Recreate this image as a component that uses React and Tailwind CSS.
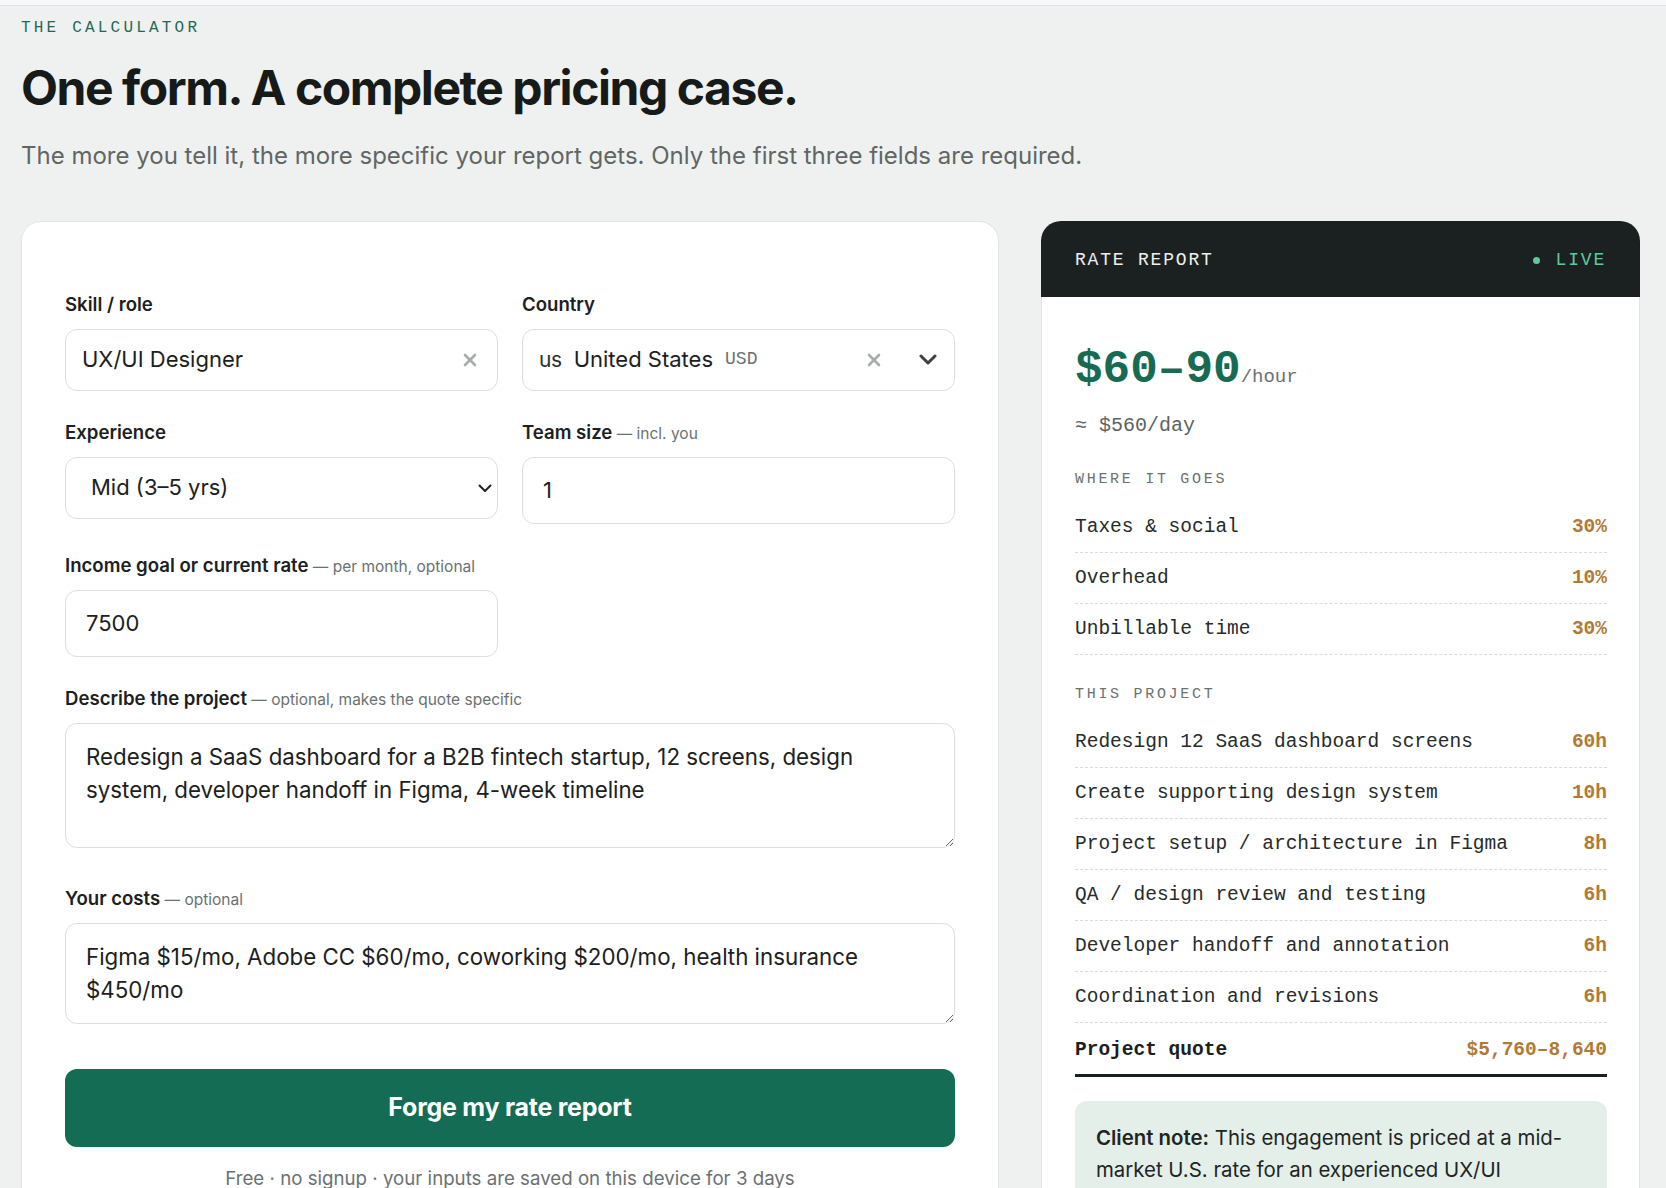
import React from "react";

// Calculator page: intake form on the left, live rate report on the right

const breakdown = [
  { label: "Taxes & social", value: "30%" },
  { label: "Overhead", value: "10%" },
  { label: "Unbillable time", value: "30%" },
];

const tasks = [
  { label: "Redesign 12 SaaS dashboard screens", value: "60h" },
  { label: "Create supporting design system", value: "10h" },
  { label: "Project setup / architecture in Figma", value: "8h" },
  { label: "QA / design review and testing", value: "6h" },
  { label: "Developer handoff and annotation", value: "6h" },
  { label: "Coordination and revisions", value: "6h" },
];

const XIcon = () => (
  <svg width="14" height="14" viewBox="0 0 14 14" className="shrink-0">
    <path d="M2 2L12 12M12 2L2 12" stroke="#a7aba9" strokeWidth="2.6" strokeLinecap="round" />
  </svg>
);

const FieldLabel = ({ children, hint }) => (
  <label className="block h-[27px] text-[18.6px] leading-[27px] font-semibold text-[#1b2120]">
    {children}
    {hint && <span className="text-[15.5px] font-normal text-[#6b7170]"> — {hint}</span>}
  </label>
);

const ReportRow = ({ label, value }) => (
  <div className="flex items-center justify-between border-b border-dashed border-[#d9dcda] py-[11px] text-[19.5px] leading-[28px]">
    <span className="text-[#262b29]">{label}</span>
    <span className="font-semibold text-[#b07a35]">{value}</span>
  </div>
);

const SectionTitle = ({ children, className = "" }) => (
  <div className={`text-[15px] leading-[20px] tracking-[0.18em] text-[#6b7170] ${className}`}>
    {children}
  </div>
);

function CalculatorForm() {
  return (
    <section className="rounded-[20px] border border-[#e2e4e3] bg-white px-[43px] pt-[69px]">
      <div className="grid grid-cols-2 gap-x-6 gap-y-7">
        {/* Skill */}
        <div className="flex flex-col gap-[11px]">
          <FieldLabel>Skill / role</FieldLabel>
          <div className="flex h-[62px] items-center rounded-[12px] border border-[#dcdfdd] bg-white pl-4 pr-5">
            <input
              readOnly
              defaultValue="UX/UI Designer"
              className="min-w-0 flex-1 bg-transparent text-[22px] text-[#1b2120] outline-none"
            />
            <XIcon />
          </div>
        </div>

        {/* Country */}
        <div className="flex flex-col gap-[11px]">
          <FieldLabel>Country</FieldLabel>
          <div className="flex h-[62px] items-center rounded-[12px] border border-[#dcdfdd] bg-white pl-4 pr-[17px]">
            <span className="text-[21px] tracking-[-0.02em] text-[#2a2f2d]">us</span>
            <span className="ml-[12px] text-[22px] text-[#1b2120]">United States</span>
            <span className="ml-[12px] font-['Liberation_Mono',monospace] text-[18px] text-[#6b7170]">USD</span>
            <span className="flex-1" />
            <XIcon />
            <svg width="18" height="11" viewBox="0 0 18 11" className="ml-[38px] shrink-0">
              <path d="M2 2L9 9L16 2" fill="none" stroke="#3c4240" strokeWidth="3" strokeLinecap="round" strokeLinejoin="round" />
            </svg>
          </div>
        </div>

        {/* Experience */}
        <div className="flex flex-col gap-[11px]">
          <FieldLabel>Experience</FieldLabel>
          <div className="relative">
            <select
              defaultValue="mid"
              className="h-[62px] w-full appearance-none rounded-[12px] border border-[#dcdfdd] bg-white pl-[25px] text-[22px] text-[#1b2120] outline-none"
            >
              <option value="junior">Junior (0–2 yrs)</option>
              <option value="mid">Mid (3–5 yrs)</option>
              <option value="senior">Senior (6+ yrs)</option>
            </select>
            <svg
              width="14"
              height="9"
              viewBox="0 0 14 9"
              className="pointer-events-none absolute right-[6px] top-[27px]"
            >
              <path d="M1.5 1.5L7 7L12.5 1.5" fill="none" stroke="#222" strokeWidth="2" strokeLinecap="round" strokeLinejoin="round" />
            </svg>
          </div>
        </div>

        {/* Team size */}
        <div className="flex flex-col gap-[11px]">
          <FieldLabel hint="incl. you">Team size</FieldLabel>
          <input
            readOnly
            defaultValue="1"
            className="h-[67px] w-full rounded-[12px] border border-[#dcdfdd] bg-white px-5 text-[22px] text-[#1b2120] outline-none"
          />
        </div>

        {/* Income */}
        <div className="flex flex-col gap-[11px]">
          <FieldLabel hint="per month, optional">Income goal or current rate</FieldLabel>
          <input
            readOnly
            defaultValue="7500"
            className="h-[67px] w-full rounded-[12px] border border-[#dcdfdd] bg-white px-5 text-[22px] text-[#1b2120] outline-none"
          />
        </div>
        <div />

        {/* Project */}
        <div className="col-span-2 flex flex-col gap-[11px]">
          <FieldLabel hint="optional, makes the quote specific">Describe the project</FieldLabel>
          <textarea
            readOnly
            defaultValue="Redesign a SaaS dashboard for a B2B fintech startup, 12 screens, design system, developer handoff in Figma, 4-week timeline"
            className="block h-[125px] w-full rounded-[12px] border border-[#dcdfdd] bg-white py-4 pl-5 pr-10 text-[22.3px] leading-[33px] text-[#1b2120] outline-none"
          />
        </div>

        {/* Costs */}
        <div className="col-span-2 mt-[9px] flex flex-col gap-[11px]">
          <FieldLabel hint="optional">Your costs</FieldLabel>
          <textarea
            readOnly
            defaultValue="Figma $15/mo, Adobe CC $60/mo, coworking $200/mo, health insurance $450/mo"
            className="block h-[101px] w-full rounded-[12px] border border-[#dcdfdd] bg-white py-4 pl-5 pr-10 text-[22.3px] leading-[33px] text-[#1b2120] outline-none"
          />
        </div>
      </div>

      <button className="mt-[45px] flex h-[78px] w-full items-center justify-center rounded-[12px] bg-[#146c54] text-[25px] font-bold tracking-[-0.01em] text-white">
        Forge my rate report
      </button>
      <p className="mt-[18px] pb-10 text-center text-[18.7px] leading-[27px] text-[#6b7170]">
        Free · no signup · your inputs are saved on this device for 3 days
      </p>
    </section>
  );
}

function RateReport() {
  return (
    <aside className="flex flex-col font-['Liberation_Mono',monospace]">
      <div className="flex h-[76px] items-center justify-between rounded-t-[20px] bg-[#1b2120] px-[34px] pt-[3px]">
        <span className="text-[18px] tracking-[0.1em] text-[#eef0ef]">RATE REPORT</span>
        <span className="flex items-center gap-[16px] text-[18px] tracking-[0.1em] text-[#5ccb9c]">
          <span className="h-[7px] w-[7px] rounded-full bg-[#5ccb9c]" />
          LIVE
        </span>
      </div>

      <div className="border-x border-[#e0e3e1] bg-white pl-[33px] pr-[32px] pt-[50px] pb-10">
        <div className="flex items-baseline">
          <span className="text-[46px] leading-[46px] font-bold text-[#166b52]">$60–90</span>
          <span className="text-[19px] text-[#6b7170]">/hour</span>
        </div>
        <div className="mt-[19px] text-[20px] leading-[28px] text-[#5d6361]">≈ $560/day</div>

        <SectionTitle className="mt-[30px]">WHERE IT GOES</SectionTitle>
        <div className="mt-3">
          {breakdown.map((row) => (
            <ReportRow key={row.label} {...row} />
          ))}
        </div>

        <SectionTitle className="mt-[30px]">THIS PROJECT</SectionTitle>
        <div className="mt-3">
          {tasks.map((row) => (
            <ReportRow key={row.label} {...row} />
          ))}
          <div className="flex items-center justify-between border-b-[3px] border-[#1b2120] pt-[13px] pb-[10px] text-[19.5px] leading-[28px] font-bold">
            <span className="text-[#1b2120]">Project quote</span>
            <span className="font-semibold text-[#b07a35]">$5,760–8,640</span>
          </div>
        </div>

        <div className="mt-[24px] rounded-[12px] bg-[#e4efe9] p-[21px] font-[Inter,sans-serif] text-[20.4px] leading-[32px] text-[#1f2523]">
          <span className="font-semibold">Client note:</span> This engagement is priced at a mid-market U.S. rate for
          an experienced UX/UI designer, covering the full redesign, a supporting design system and a clean developer
          handoff.
        </div>
      </div>
    </aside>
  );
}

export default function App() {
  return (
    <div className="h-[1188px] overflow-hidden bg-[#eff1f0] font-[Inter,sans-serif] text-[#1b2120]">
      <div className="h-[6px] border-b border-[#e1e2e5] bg-[#f8f8fa]" />

      <div className="w-[1640px] pl-[21px] pt-[10px]">
        <div className="font-['Liberation_Mono',monospace] text-[16px] leading-[24px] tracking-[0.2em] text-[#1e6b55]">
          THE CALCULATOR
        </div>
        <h1 className="mt-[22px] text-[48px] leading-[1.1] font-bold tracking-[-0.03em] text-[#161b1a]">
          One form. A complete pricing case.
        </h1>
        <p className="mt-[24px] text-[24px] leading-[33px] text-[#5f6664]">
          The more you tell it, the more specific your report gets. Only the first three fields are required.
        </p>

        <div className="mt-[49px] grid grid-cols-[minmax(0,1fr)_599px] items-start gap-[42px]">
          <CalculatorForm />
          <RateReport />
        </div>
      </div>
    </div>
  );
}
